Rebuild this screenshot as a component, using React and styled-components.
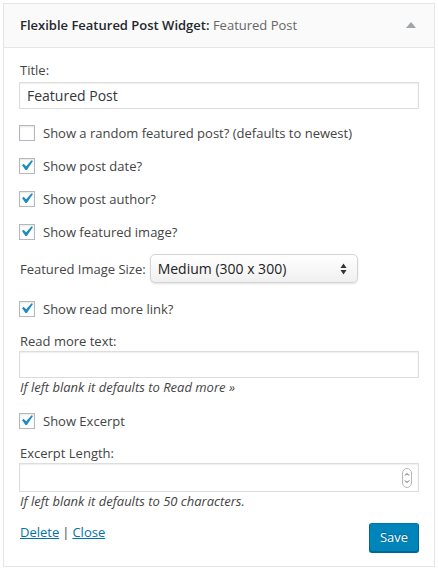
import React from "react";
import styled, { createGlobalStyle } from "styled-components";

const Global = createGlobalStyle`
  html, body { margin: 0; padding: 0; background: #fff; }
  body { font-family: "Open Sans", "Noto Sans", sans-serif; font-size: 13px; color: #444; }
  * { box-sizing: border-box; }
`;

const Page = styled.div`
  padding: 3px 3px 0 3px;
  width: 438px;
`;

const Widget = styled.div`
  width: 432px;
  border: 1px solid #e5e5e5;
  box-shadow: 0 1px 1px rgba(0, 0, 0, 0.04);
  background: #fff;
`;

const Header = styled.div`
  height: 44px;
  background: #fafafa;
  border-bottom: 1px solid #e5e5e5;
  display: flex;
  align-items: center;
  justify-content: space-between;
  padding: 0 18px 0 16px;
`;

const HeaderTitle = styled.h3`
  margin: 0;
  font-size: 13px;
  font-weight: 600;
  color: #23282d;
  line-height: 1;
`;

const InTitle = styled.span`
  font-weight: 400;
  color: #666;
`;

const Arrow = styled.span`
  width: 0;
  height: 0;
  border-left: 5px solid transparent;
  border-right: 5px solid transparent;
  border-bottom: 6px solid #a0a5aa;
  margin-top: -2px;
`;

const Body = styled.div`
  padding: 13px 15px 14px 15px;
  display: flex;
  flex-direction: column;
`;

const Label = styled.div`
  font-size: 13px;
  line-height: 18px;
  color: #444;
  padding-left: 1px;
  margin-top: ${(p) => p.$mt || 0}px;
`;

const TextInput = styled.div`
  height: ${(p) => p.$h || 27}px;
  margin-top: ${(p) => p.$mt || 0}px;
  border: 1px solid #ddd;
  box-shadow: inset 0 1px 2px rgba(0, 0, 0, 0.07);
  background: #fff;
  display: flex;
  align-items: center;
  justify-content: space-between;
  padding: 0 6px 0 7px;
  font-size: 14px;
  color: #32373c;
`;

const Row = styled.div`
  display: flex;
  align-items: center;
  gap: 8px;
  margin-top: ${(p) => p.$mt || 0}px;
  height: 16px;
`;

const Box = styled.span`
  width: 16px;
  height: 16px;
  flex: none;
  border: 1px solid #b4b9be;
  background: #fff;
  box-shadow: inset 0 1px 2px rgba(0, 0, 0, 0.1);
  display: flex;
  overflow: visible;
`;

const Check = styled.svg`
  width: 21px;
  height: 21px;
  flex: none;
  margin: -4px 0 0 -4px;
`;

const RowText = styled.span`
  font-size: 13px;
  line-height: 18px;
  color: #444;
`;

const SelectRow = styled.div`
  display: flex;
  align-items: center;
  gap: 4px;
  margin-top: ${(p) => p.$mt || 0}px;
  padding-left: 1px;
`;

const Select = styled.div`
  width: 208px;
  height: 29px;
  border-radius: 5px;
  border: 1px solid #d4d4d4;
  background: linear-gradient(#ffffff, #f0f0f0);
  box-shadow: 0 1px 2px rgba(0, 0, 0, 0.12);
  display: flex;
  align-items: center;
  justify-content: space-between;
  padding: 0 10px 0 7px;
  font-size: 14px;
  color: #222;
`;

const Hint = styled.div`
  font-style: italic;
  font-size: 13px;
  line-height: 18px;
  color: #444;
  padding-left: 1px;
  margin-top: ${(p) => p.$mt || 0}px;
`;

const Footer = styled.div`
  display: flex;
  justify-content: space-between;
  align-items: flex-start;
  margin-top: ${(p) => p.$mt || 0}px;
`;

const Links = styled.div`
  font-size: 13px;
  line-height: 18px;
  color: #444;
  padding-left: 1px;
`;

const Link = styled.a`
  color: #0073aa;
  text-decoration: underline;
`;

const Sep = styled.span`
  margin: 0 3px;
`;

const SaveButton = styled.button`
  width: 50px;
  height: 29px;
  background: #0085ba;
  border: 1px solid;
  border-color: #0073aa #006799 #006799;
  border-radius: 3px;
  box-shadow: 0 1px 0 #006799;
  color: #fff;
  font-family: "Open Sans", sans-serif;
  font-size: 13px;
  padding: 0 0 2px;
  text-shadow: 0 -1px 1px #006799, 1px 0 1px #006799;
`;

const Checkbox = ({ checked }) => (
  <Box>
    {checked && (
      <Check viewBox="0 0 20 20">
        <path fill="#1e8cbe" d="M14.83 4.89l1.34.94-5.81 8.38H9.02L5.78 9.67l1.34-1.25 2.57 2.4z" />
      </Check>
    )}
  </Box>
);

const Spinner = () => (
  <svg width="10" height="20" viewBox="0 0 10 20">
    <rect x="0.5" y="0.5" width="9" height="19" rx="4.5" fill="#fff" stroke="#b8b8b8" />
    <path d="M3 7.5 L5 5.5 L7 7.5" fill="none" stroke="#555" strokeWidth="1" />
    <path d="M3 12.5 L5 14.5 L7 12.5" fill="none" stroke="#555" strokeWidth="1" />
  </svg>
);

const SelectArrows = () => (
  <svg width="7" height="12" viewBox="0 0 7 12">
    <path d="M3.5 0.5 L6.5 5 H0.5 Z" fill="#333" />
    <path d="M3.5 11.5 L6.5 7 H0.5 Z" fill="#333" />
  </svg>
);

export default function App() {
  return (
    <Page>
      <Global />
      <Widget>
        <Header>
          <HeaderTitle>
            Flexible Featured Post Widget:<InTitle> Featured Post</InTitle>
          </HeaderTitle>
          <Arrow />
        </Header>
        <Body>
          <Label>Title:</Label>
          <TextInput $mt={3}>Featured Post</TextInput>
          <Row $mt={16}>
            <Checkbox />
            <RowText>Show a random featured post? (defaults to newest)</RowText>
          </Row>
          <Row $mt={17}>
            <Checkbox checked />
            <RowText>Show post date?</RowText>
          </Row>
          <Row $mt={17}>
            <Checkbox checked />
            <RowText>Show post author?</RowText>
          </Row>
          <Row $mt={17}>
            <Checkbox checked />
            <RowText>Show featured image?</RowText>
          </Row>
          <SelectRow $mt={14}>
            <RowText>Featured Image Size:</RowText>
            <Select>
              <span>Medium (300 x 300)</span>
              <SelectArrows />
            </Select>
          </SelectRow>
          <Row $mt={18}>
            <Checkbox checked />
            <RowText>Show read more link?</RowText>
          </Row>
          <Label $mt={15}>Read more text:</Label>
          <TextInput $mt={1} />
          <Hint>If left blank it defaults to Read more »</Hint>
          <Row $mt={17}>
            <Checkbox checked />
            <RowText>Show Excerpt</RowText>
          </Row>
          <Label $mt={15}>Excerpt Length:</Label>
          <TextInput $mt={1} $h={29}>
            <span />
            <Spinner />
          </TextInput>
          <Hint>If left blank it defaults to 50 characters.</Hint>
          <Footer $mt={13}>
            <Links>
              <Link href="#">Delete</Link>
              <Sep>|</Sep>
              <Link href="#">Close</Link>
            </Links>
            <SaveButton>Save</SaveButton>
          </Footer>
        </Body>
      </Widget>
    </Page>
  );
}
